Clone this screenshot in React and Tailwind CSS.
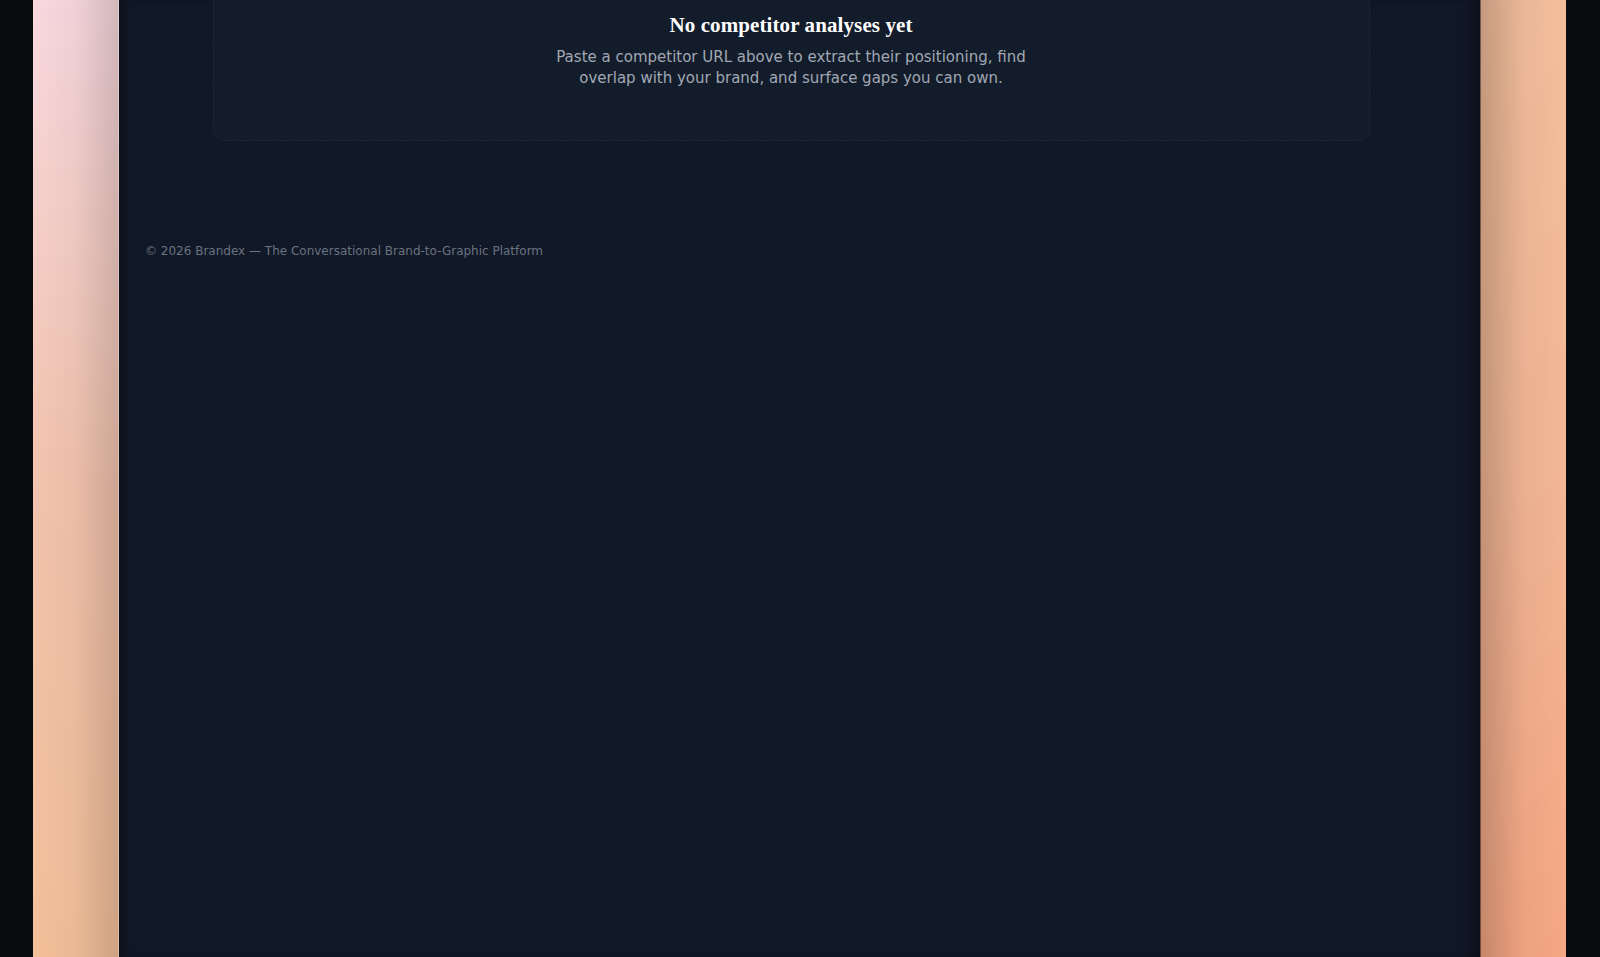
const sans = { fontFamily: '"DejaVu Sans", sans-serif' };

const EmptyState = () => (
  <div className="mx-auto w-[1157px] rounded-b-xl border border-t-0 border-dashed border-[#1f2a3a] bg-[#131c2a] px-6 pt-[11px] pb-[51px] text-center">
    <h3 className="font-['Liberation_Serif',serif] text-[21px] leading-7 font-bold tracking-[0.1px] text-white">
      No competitor analyses yet
    </h3>
    <p
      className="mx-auto mt-2 max-w-lg text-[15px] leading-[21px] text-[#a1a8b4]"
      style={sans}
    >
      Paste a competitor URL above to extract their positioning, find overlap
      with your brand, and surface gaps you can own.
    </p>
  </div>
);

const Footer = () => (
  <footer className="mt-[102px] px-[26px]">
    <p className="text-[12px] leading-4 text-[#6b7280]" style={sans}>
      © 2026 Brandex — The Conversational Brand-to-Graphic Platform
    </p>
  </footer>
);

export default function App() {
  return (
    <div className="flex h-screen w-full overflow-hidden bg-[#0a0b0e]">
      <div className="w-[33px] shrink-0" />

      {/* left bezel */}
      <div className="relative w-[86px] shrink-0 bg-gradient-to-b from-[#f9d9e0] via-[#f3c4ae] to-[#f4c09a]">
        <div className="absolute inset-0 bg-gradient-to-r from-transparent via-black/[0.04] to-black/[0.16]" />
        <div className="absolute inset-y-0 right-0 w-px bg-white/30" />
      </div>

      {/* app panel */}
      <main className="relative flex-1 bg-[#111827] shadow-[inset_10px_0_12px_-8px_rgba(0,0,0,0.45),inset_-16px_0_14px_-8px_rgba(0,0,0,0.35)]">
        <div className="w-[1344px]">
          <EmptyState />
          <Footer />
        </div>
      </main>

      {/* right bezel */}
      <div className="relative w-[86px] shrink-0 bg-gradient-to-b from-[#f4bf9d] via-[#f3b796] to-[#f6a784]">
        <div className="absolute inset-0 bg-gradient-to-l from-transparent via-black/[0.04] to-black/[0.2]" />
        <div className="absolute inset-y-0 left-0 w-px bg-black/40" />
      </div>

      <div className="w-[34px] shrink-0" />
    </div>
  );
}
